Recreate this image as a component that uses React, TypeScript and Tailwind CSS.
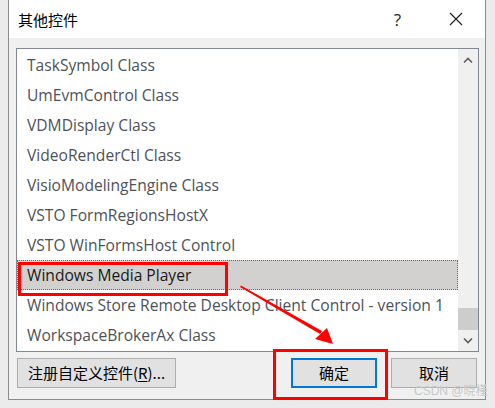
import React from "react";

const items = [
  "TaskSymbol Class",
  "UmEvmControl Class",
  "VDMDisplay Class",
  "VideoRenderCtl Class",
  "VisioModelingEngine Class",
  "VSTO FormRegionsHostX",
  "VSTO WinFormsHost Control",
  "Windows Media Player",
  "Windows Store Remote Desktop Client Control - version 1",
  "WorkspaceBrokerAx Class",
];

const latin = { fontFamily: '"Open Sans", "Noto Sans CJK SC", sans-serif' };
const cjk = { fontFamily: '"Noto Sans CJK SC", "Noto Sans", sans-serif' };

export default function App() {
  return (
    <div className="relative w-[495px] h-[408px] bg-[#ebebeb] overflow-hidden">
      <div className="ml-[8px] w-[478px] h-[400px] flex flex-col border-x border-b border-[#8c8c8c] bg-[#f0f0f0]">
        {/* title bar */}
        <div className="h-[38px] bg-white flex items-center shrink-0">
          <span className="ml-[9px] text-[15px] text-black leading-none" style={cjk}>其他控件</span>
          <span className="ml-auto mr-[48px] text-[17px] text-[#222] leading-none" style={latin}>?</span>
          <svg width="14" height="14" viewBox="0 0 14 14" className="mr-[22px]">
            <path d="M1 1 L13 13 M13 1 L1 13" stroke="#1a1a1a" strokeWidth="1.1" fill="none" />
          </svg>
        </div>
        {/* list */}
        <div className="mt-[10px] ml-[7px] w-[463px] h-[304px] border border-[#828790] bg-white flex shrink-0">
          <div className="flex-1 flex flex-col pt-[1px] overflow-hidden">
            {items.map((t, i) => (
              <div
                key={t}
                className={
                  "h-[30px] shrink-0 flex items-center pl-[9px] pt-[2px] whitespace-nowrap text-[15.6px] " +
                  (i === 7
                    ? "bg-[#d2d1cf] border border-dotted border-[#6b6b6b] text-[#1a1a1a]"
                    : "text-[#4e5258] border border-transparent")
                }
                style={latin}
              >
                {t}
              </div>
            ))}
          </div>
          <div className="w-[20px] bg-[#f0f0f0] flex flex-col items-center">
            <div className="h-[22px] flex items-center justify-center">
              <svg width="10" height="6" viewBox="0 0 10 6">
                <path d="M1 5.5 L5 1.5 L9 5.5" stroke="#606060" strokeWidth="1.6" fill="none" />
              </svg>
            </div>
            <div className="flex-1" />
            <div className="w-[20px] h-[22px] bg-[#cdcdcd]" />
            <div className="h-[21px] flex items-center justify-center">
              <svg width="10" height="6" viewBox="0 0 10 6">
                <path d="M1 0.5 L5 4.5 L9 0.5" stroke="#606060" strokeWidth="1.6" fill="none" />
              </svg>
            </div>
          </div>
        </div>
        {/* buttons */}
        <div className="mt-[6px] flex items-start">
          <button
            className="ml-[8px] w-[159px] h-[30px] bg-[#e1e1e1] border border-[#adadad] text-[15px] text-black flex items-center justify-center"
            style={cjk}
          >
            注册自定义控件(<span className="underline underline-offset-2">R</span>)...
          </button>
          <button
            className="ml-auto w-[86px] h-[30px] bg-[#e1e1e1] border-2 border-[#0078d7] text-[15px] text-black flex items-center justify-center"
            style={cjk}
          >
            确定
          </button>
          <button
            className="ml-[14px] mr-[8px] w-[86px] h-[30px] bg-[#e1e1e1] border border-[#adadad] text-[15px] text-black flex items-center justify-center"
            style={cjk}
          >
            取消
          </button>
        </div>
      </div>

      {/* annotations */}
      <div className="absolute left-[18px] top-[262px] w-[210px] h-[34px] border-[3px] border-[#ff0000]" />
      <div className="absolute left-[273px] top-[349px] w-[115px] h-[51px] border-[3px] border-[#ff0000]" />
      <svg className="absolute left-0 top-0" width="495" height="408" viewBox="0 0 495 408">
        <polygon points="240,287 241,285.5 322,331 320,334" fill="#ff0000" />
        <polygon points="315,339 333,344 327,328" fill="#ff0000" />
      </svg>
      <div
        className="absolute left-[414px] top-[385px] text-[12px] text-[#c8c8c8] leading-none"
        style={{ fontFamily: '"Liberation Sans", "Noto Sans CJK SC", sans-serif' }}
      >
        CSDN @晓槿
      </div>
    </div>
  );
}
